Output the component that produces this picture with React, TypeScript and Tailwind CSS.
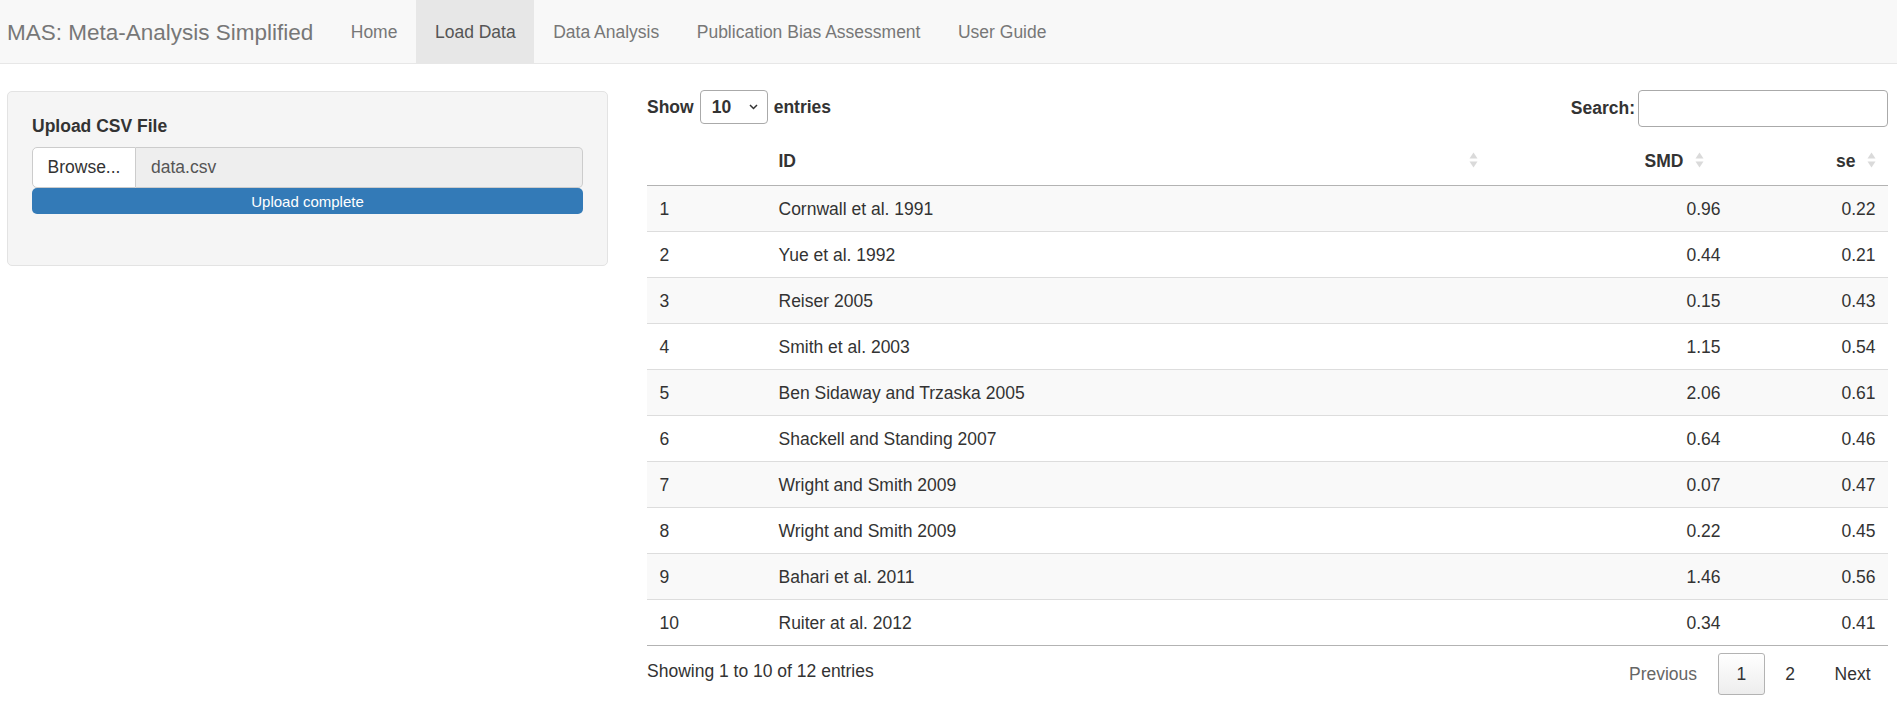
import React from "react";

interface StudyRow {
  id: string;
  smd: string;
  se: string;
}

const rows: StudyRow[] = [
  { id: "Cornwall et al. 1991", smd: "0.96", se: "0.22" },
  { id: "Yue et al. 1992", smd: "0.44", se: "0.21" },
  { id: "Reiser 2005", smd: "0.15", se: "0.43" },
  { id: "Smith et al. 2003", smd: "1.15", se: "0.54" },
  { id: "Ben Sidaway and Trzaska 2005", smd: "2.06", se: "0.61" },
  { id: "Shackell and Standing 2007", smd: "0.64", se: "0.46" },
  { id: "Wright and Smith 2009", smd: "0.07", se: "0.47" },
  { id: "Wright and Smith 2009", smd: "0.22", se: "0.45" },
  { id: "Bahari et al. 2011", smd: "1.46", se: "0.56" },
  { id: "Ruiter at al. 2012", smd: "0.34", se: "0.41" },
];

const navItems = ["Home", "Load Data", "Data Analysis", "Publication Bias Assessment", "User Guide"];

// 並べ替えアイコン（上下の三角）
const SortIcon: React.FC<{ className?: string }> = ({ className = "right-[12px]" }) => (
  <svg
    width="9"
    height="16"
    viewBox="0 0 9 16"
    className={`absolute top-1/2 -translate-y-1/2 ${className}`}
  >
    <polygon points="0.5,6.5 4.5,0.5 8.5,6.5" fill="#dadada" />
    <polygon points="0.5,9.5 8.5,9.5 4.5,15.5" fill="#dadada" />
  </svg>
);

const App: React.FC = () => {
  return (
    <div className="min-h-screen bg-white font-['Liberation_Sans',Arial,sans-serif] text-[17.5px] leading-[25px] text-[#333]">
      <nav className="flex h-[64px] items-stretch border-b border-[#e7e7e7] bg-[#f8f8f8]">
        <div className="flex w-[332px] shrink-0 items-center pl-[7px] pt-[2px] text-[22.5px] text-[#777]">
          MAS: Meta-Analysis Simplified
        </div>
        <ul className="flex items-stretch">
          {navItems.map((item) => (
            <li
              key={item}
              className={
                item === "Load Data"
                  ? "flex items-center bg-[#e7e7e7] px-[18.75px] pt-[2px] text-[#555]"
                  : "flex items-center px-[18.75px] pt-[2px] text-[#777]"
              }
            >
              {item}
            </li>
          ))}
        </ul>
      </nav>

      <div className="flex">
        <div className="ml-[7px] mt-[27px] w-[601px] shrink-0 self-start">
          <div className="rounded-[5px] border border-[#e3e3e3] bg-[#f5f5f5] px-[24px] pb-[24px] pt-[22px]">
            <div className="mb-[26.5px]">
              <p className="mb-[8px] font-bold">Upload CSV File</p>
              <div className="flex h-[41px]">
                <div className="flex w-[104px] items-center justify-center rounded-l-[5px] border border-[#ccc] bg-white text-[#333]">
                  Browse...
                </div>
                <div className="flex flex-1 items-center rounded-r-[5px] border border-l-0 border-[#ccc] bg-[#eee] px-[15px] text-[#555]">
                  data.csv
                </div>
              </div>
              <div className="flex h-[26px] items-center justify-center rounded-[5px] bg-[#337ab7] text-[15px] text-white">
                Upload complete
              </div>
            </div>
          </div>
        </div>

        <div className="ml-[39px] w-[1241px] shrink-0 pt-[26px]">
          <div className="flex h-[37px] items-start justify-between">
            <div className="flex items-center font-bold">
              <span>Show</span>
              <div className="mx-[6px] flex h-[34px] w-[68px] items-center justify-between rounded-[4px] border border-[#aaa] bg-white pl-[11px] pr-[9px]">
                <span>10</span>
                <svg width="9" height="6" viewBox="0 0 9 6">
                  <path d="M1 1 L4.5 4.5 L8 1" fill="none" stroke="#333" strokeWidth="1.5" />
                </svg>
              </div>
              <span>entries</span>
            </div>
            <div className="flex items-center font-bold">
              <span>Search:</span>
              <div className="ml-[3px] h-[37px] w-[250px] rounded-[4px] border border-[#aaa] bg-white" />
            </div>
          </div>

          <table className="mt-[8px] w-full table-fixed border-collapse">
            <colgroup>
              <col className="w-[119px]" />
              <col />
              <col className="w-[243px]" />
              <col className="w-[155px]" />
            </colgroup>
            <thead>
              <tr className="border-b border-[#b3b3b3]">
                <th className="px-[12.5px] pb-[11.5px] pt-[13.5px]" />
                <th className="relative px-[12.5px] pb-[11.5px] pt-[13.5px] text-left font-bold">
                  ID
                  <SortIcon />
                </th>
                <th className="relative pb-[11.5px] pl-[12.5px] pr-[49.5px] pt-[13.5px] text-right font-bold">
                  SMD
                  <SortIcon className="right-[29px]" />
                </th>
                <th className="relative pb-[11.5px] pl-[12.5px] pr-[32.5px] pt-[13.5px] text-right font-bold">
                  se
                  <SortIcon />
                </th>
              </tr>
            </thead>
            <tbody>
              {rows.map((row, i) => (
                <tr
                  key={i}
                  className={
                    (i % 2 === 0 ? "bg-[#f9f9f9] " : "bg-white ") +
                    (i === rows.length - 1 ? "border-b border-[#b3b3b3]" : "border-b border-[#ddd]")
                  }
                >
                  <td className="px-[12.5px] pb-[9px] pt-[11px]">{i + 1}</td>
                  <td className="px-[12.5px] pb-[9px] pt-[11px]">{row.id}</td>
                  <td className="px-[12.5px] pb-[9px] pt-[11px] text-right">{row.smd}</td>
                  <td className="px-[12.5px] pb-[9px] pt-[11px] text-right">{row.se}</td>
                </tr>
              ))}
            </tbody>
          </table>

          <div className="flex items-start justify-between">
            <div className="pt-[13px]">Showing 1 to 10 of 12 entries</div>
            <div className="flex items-center pt-[7px]">
              <span className="px-[17.5px] py-[8.5px] text-[#666]">Previous</span>
              <span className="ml-[3.5px] flex h-[42px] min-w-[46px] items-center justify-center rounded-[3px] border border-[#b3b3b3] bg-gradient-to-b from-white to-[#ededed] px-[17.5px]">
                1
              </span>
              <span className="ml-[3px] px-[17.5px] py-[8.5px]">2</span>
              <span className="ml-[4.5px] px-[17.5px] py-[8.5px]">Next</span>
            </div>
          </div>
        </div>
      </div>
    </div>
  );
};

export default App;
